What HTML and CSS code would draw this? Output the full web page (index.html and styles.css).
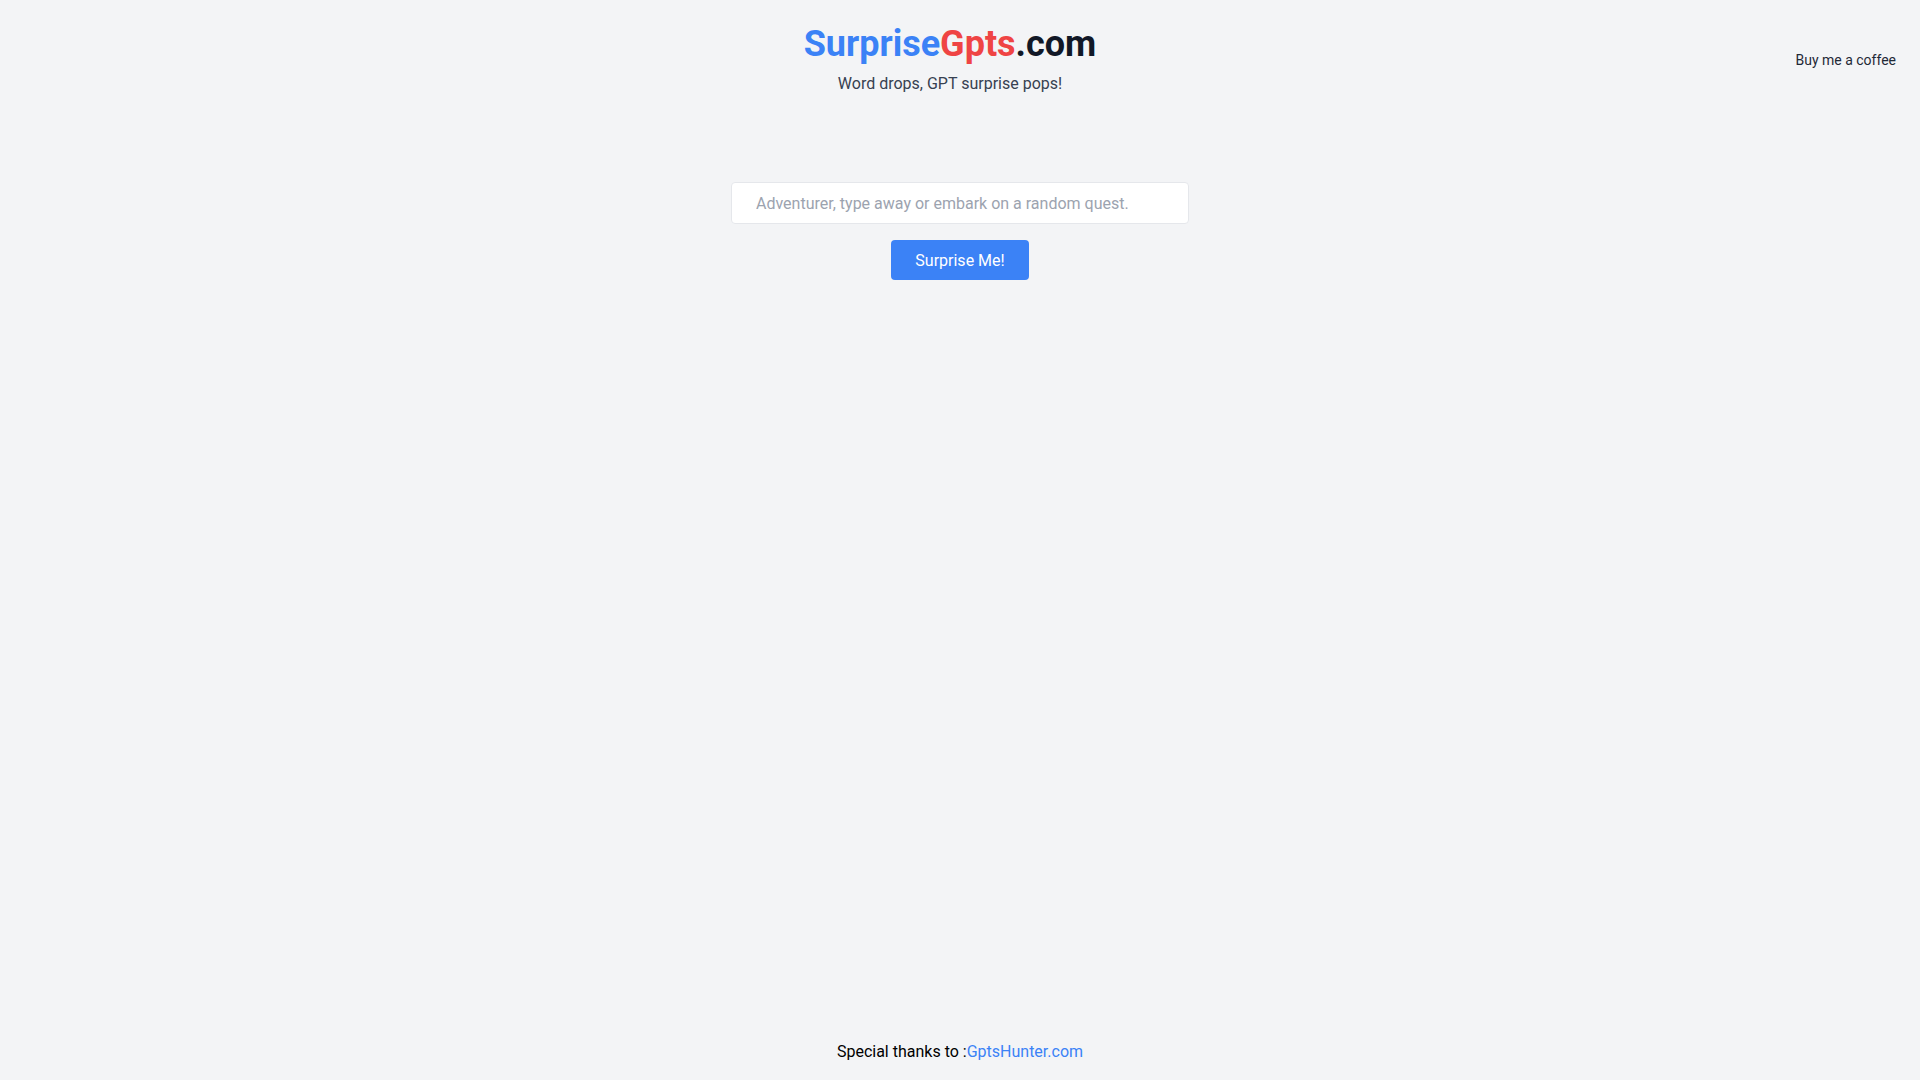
FILE: index.html
```html
<!DOCTYPE html>
<html lang="en">
<head>
<meta charset="utf-8">
<title>SurpriseGpts.com</title>
<link rel="stylesheet" href="styles.css">
</head>
<body>
<div class="page">
  <header class="header">
    <div class="brand">
      <h1 class="title"><span class="t-blue">Surprise</span><span class="t-red">Gpts</span><span class="t-dark">.com</span></h1>
      <p class="tagline">Word drops, GPT surprise pops!</p>
    </div>
    <a class="coffee" href="#">Buy me a coffee</a>
  </header>
  <main class="main">
    <input class="search" type="text" placeholder="Adventurer, type away or embark on a random quest.">
    <button class="btn" type="button">Surprise Me!</button>
  </main>
  <footer class="footer">
    <span>Special thanks to :</span><a class="footer-link" href="#">GptsHunter.com</a>
  </footer>
</div>
</body>
</html>
```
FILE: styles.css
```css
* { box-sizing: border-box; }
html, body { margin: 0; padding: 0; }
body {
  background: #f3f4f6;
  font-family: Roboto, "Liberation Sans", Arial, sans-serif;
  color: #111827;
}
.page {
  min-height: 100vh;
  display: flex;
  flex-direction: column;
}
.header {
  position: relative;
  display: flex;
  justify-content: center;
  padding: 24px 20px 0 0;
}
.brand {
  display: flex;
  flex-direction: column;
  align-items: center;
}
.title {
  margin: 0;
  font-size: 36px;
  line-height: 40px;
  font-weight: 700;
}
.t-blue { color: #3b82f6; }
.t-red { color: #ef4444; }
.t-dark { color: #111827; }
.tagline {
  margin: 8px 0 0;
  font-size: 16px;
  line-height: 24px;
  color: #374151;
}
.coffee {
  position: absolute;
  top: 50px;
  right: 24px;
  font-size: 14px;
  line-height: 20px;
  color: #1f2937;
  text-decoration: none;
}
.main {
  flex: 1;
  display: flex;
  flex-direction: column;
  align-items: center;
  padding-top: 86px;
}
.search {
  width: 458px;
  height: 42px;
  padding: 0 24px;
  border: 1px solid #e5e7eb;
  border-radius: 4px;
  background: #fff;
  font-family: inherit;
  font-size: 16px;
  color: #111827;
  outline: none;
}
.search::placeholder { color: #9ca3af; }
.btn {
  margin-top: 16px;
  height: 40px;
  padding: 0 24px;
  border: none;
  border-radius: 4px;
  background: #3b82f6;
  color: #fff;
  font-family: inherit;
  font-size: 16px;
  cursor: pointer;
}
.footer {
  text-align: center;
  font-size: 16px;
  line-height: 24px;
  color: #000;
  padding-bottom: 16px;
}
.footer-link {
  color: #3b82f6;
  text-decoration: none;
}
```
